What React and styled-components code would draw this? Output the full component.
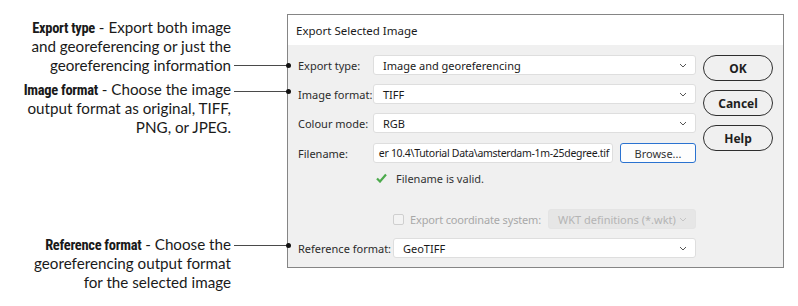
import React from "react";
import styled, { createGlobalStyle } from "styled-components";

const Global = createGlobalStyle`
  html, body { margin: 0; padding: 0; background: #ffffff; }
  * { box-sizing: border-box; }
`;

const Page = styled.div`
  width: 798px;
  height: 306px;
  display: flex;
  align-items: flex-start;
  background: #fff;
  overflow: hidden;
`;

const Annotations = styled.div`
  width: 287px;
  flex: none;
  display: flex;
  flex-direction: column;
  font-family: "Lato", "Open Sans", sans-serif;
  font-size: 15.2px;
  color: #1a1a1a;
  position: relative;
  z-index: 2;
`;

const Note = styled.div`
  margin-top: ${(p) => p.$mt}px;
  display: flex;
  flex-direction: column;
`;

const NoteLine = styled.div`
  display: grid;
  grid-template-columns: 231px 56px;
  align-items: center;
  height: 19px;
  line-height: 19px;
`;

const NoteText = styled.span`
  text-align: right;
  white-space: nowrap;
`;

const Term = styled.b`
  font-family: "Roboto Condensed", "Liberation Sans Narrow", "Lato", sans-serif;
  font-weight: 700;
  font-size: 14.5px;
  letter-spacing: -0.3px;
`;

const Connector = styled.span`
  position: relative;
  height: 1px;
  margin-left: 3px;
  margin-top: ${(p) => p.$dy || 0}px;
  background: #4a4a4a;
  &::after {
    content: "";
    position: absolute;
    right: -4px;
    top: -2px;
    width: 5px;
    height: 5px;
    border-radius: 50%;
    background: #111;
  }
`;

const Dialog = styled.div`
  margin-top: 14px;
  width: 497px;
  height: 254px;
  flex: none;
  border: 1px solid #858585;
  display: flex;
  flex-direction: column;
  font-family: "Noto Sans", "Open Sans", sans-serif;
  font-size: 11px;
  color: #222;
`;

const TitleBar = styled.div`
  height: 30px;
  background: #fff;
  display: flex;
  align-items: center;
  padding-left: 8px;
  font-size: 11.5px;
  color: #1a1a1a;
`;

const Body = styled.div`
  flex: 1;
  background: #f0f0f0;
  display: flex;
  padding: 10px 10px 0 10px;
  gap: 7px;
`;

const Form = styled.div`
  width: 398px;
  display: flex;
  flex-direction: column;
`;

const Row = styled.div`
  display: flex;
  align-items: center;
  height: 20px;
  margin-top: ${(p) => p.$mt || 0}px;
  padding-left: ${(p) => p.$pl || 0}px;
`;

const Label = styled.div`
  width: ${(p) => p.$w || 75}px;
  flex: none;
  white-space: nowrap;
  color: #2b2b2b;
`;

const Combo = styled.div`
  flex: 1;
  height: 20px;
  display: flex;
  align-items: center;
  justify-content: space-between;
  padding: 0 8px 0 9px;
  border-radius: 3px;
  border: 1px solid ${(p) => (p.$disabled ? "#e4e4e4" : "#dedede")};
  background: ${(p) => (p.$disabled ? "#e6e6e6" : "#fff")};
  color: ${(p) => (p.$disabled ? "#b4b4b4" : "#1a1a1a")};
  white-space: nowrap;
`;

const Chevron = ({ color = "#555" }) => (
  <svg width="8" height="5" viewBox="0 0 8 5">
    <polyline points="1,1 4,4 7,1" fill="none" stroke={color} strokeWidth="1" />
  </svg>
);

const FileInput = styled.div`
  width: 240px;
  flex: none;
  height: 20px;
  display: flex;
  align-items: center;
  justify-content: flex-end;
  overflow: hidden;
  padding-right: 3px;
  border: 1px solid #dedede;
  border-radius: 3px;
  background: #fff;
  white-space: nowrap;
  color: #1a1a1a;
  font-size: 10.5px;
  letter-spacing: -0.3px;
`;

const Browse = styled.div`
  margin-left: 7px;
  flex: 1;
  height: 20px;
  display: flex;
  align-items: center;
  justify-content: center;
  border: 1px solid #2a72d0;
  border-radius: 3px;
  background: #fdfdfd;
  color: #333;
`;

const Valid = styled.div`
  display: flex;
  align-items: center;
  height: 20px;
  margin-top: 5px;
  padding-left: 78px;
  gap: 9px;
  color: #333;
`;

const Check = styled.span`
  width: 11px;
  height: 11px;
  border: 1px solid #cfcfcf;
  border-radius: 2px;
  background: #f3f3f3;
  flex: none;
  margin-right: 6px;
`;

const DisabledText = styled.span`
  color: #a8a8a8;
  white-space: nowrap;
  flex: none;
  margin-right: 7px;
  letter-spacing: -0.15px;
`;

const Buttons = styled.div`
  width: 70px;
  display: flex;
  flex-direction: column;
  gap: 9px;
`;

const PillButton = styled.div`
  height: 26px;
  border: 1px solid #2e2e2e;
  border-radius: 13px;
  display: flex;
  align-items: center;
  justify-content: center;
  font-weight: 700;
  font-size: 12px;
  color: #1e1e1e;
`;

export default function App() {
  return (
    <Page>
      <Global />
      <Annotations>
        <Note $mt={18}>
          <NoteLine>
            <NoteText>
              <Term>Export type</Term> - Export both image
            </NoteText>
          </NoteLine>
          <NoteLine>
            <NoteText>and georeferencing or just the</NoteText>
          </NoteLine>
          <NoteLine>
            <NoteText>georeferencing information</NoteText>
            <Connector />
          </NoteLine>
        </Note>
        <Note $mt={5}>
          <NoteLine>
            <NoteText>
              <Term>Image format</Term> - Choose the image
            </NoteText>
            <Connector $dy={2} />
          </NoteLine>
          <NoteLine>
            <NoteText>output format as original, TIFF,</NoteText>
          </NoteLine>
          <NoteLine>
            <NoteText>PNG, or JPEG.</NoteText>
          </NoteLine>
        </Note>
        <Note $mt={98}>
          <NoteLine>
            <NoteText>
              <Term>Reference format</Term> - Choose the
            </NoteText>
            <Connector />
          </NoteLine>
          <NoteLine>
            <NoteText>georeferencing output format</NoteText>
          </NoteLine>
          <NoteLine>
            <NoteText>for the selected image</NoteText>
          </NoteLine>
        </Note>
      </Annotations>
      <Dialog>
        <TitleBar>Export Selected Image</TitleBar>
        <Body>
          <Form>
            <Row>
              <Label>Export type:</Label>
              <Combo>
                Image and georeferencing <Chevron />
              </Combo>
            </Row>
            <Row $mt={9}>
              <Label>Image format:</Label>
              <Combo>
                TIFF <Chevron />
              </Combo>
            </Row>
            <Row $mt={9}>
              <Label>Colour mode:</Label>
              <Combo>
                RGB <Chevron />
              </Combo>
            </Row>
            <Row $mt={10}>
              <Label>Filename:</Label>
              <FileInput>er 10.4\Tutorial Data\amsterdam-1m-25degree.tif</FileInput>
              <Browse>Browse...</Browse>
            </Row>
            <Valid>
              <svg width="11" height="10" viewBox="0 0 11 10">
                <polyline points="1,5.5 4,8.5 10,1.5" fill="none" stroke="#4caa4c" strokeWidth="2.2" />
              </svg>
              Filename is valid.
            </Valid>
            <Row $mt={21} $pl={95}>
              <Check />
              <DisabledText>Export coordinate system:</DisabledText>
              <Combo $disabled>
                WKT definitions (*.wkt) <Chevron color="#c4c4c4" />
              </Combo>
            </Row>
            <Row $mt={9}>
              <Label $w={95}>Reference format:</Label>
              <Combo>
                GeoTIFF <Chevron />
              </Combo>
            </Row>
          </Form>
          <Buttons>
            <PillButton>OK</PillButton>
            <PillButton>Cancel</PillButton>
            <PillButton>Help</PillButton>
          </Buttons>
        </Body>
      </Dialog>
    </Page>
  );
}
